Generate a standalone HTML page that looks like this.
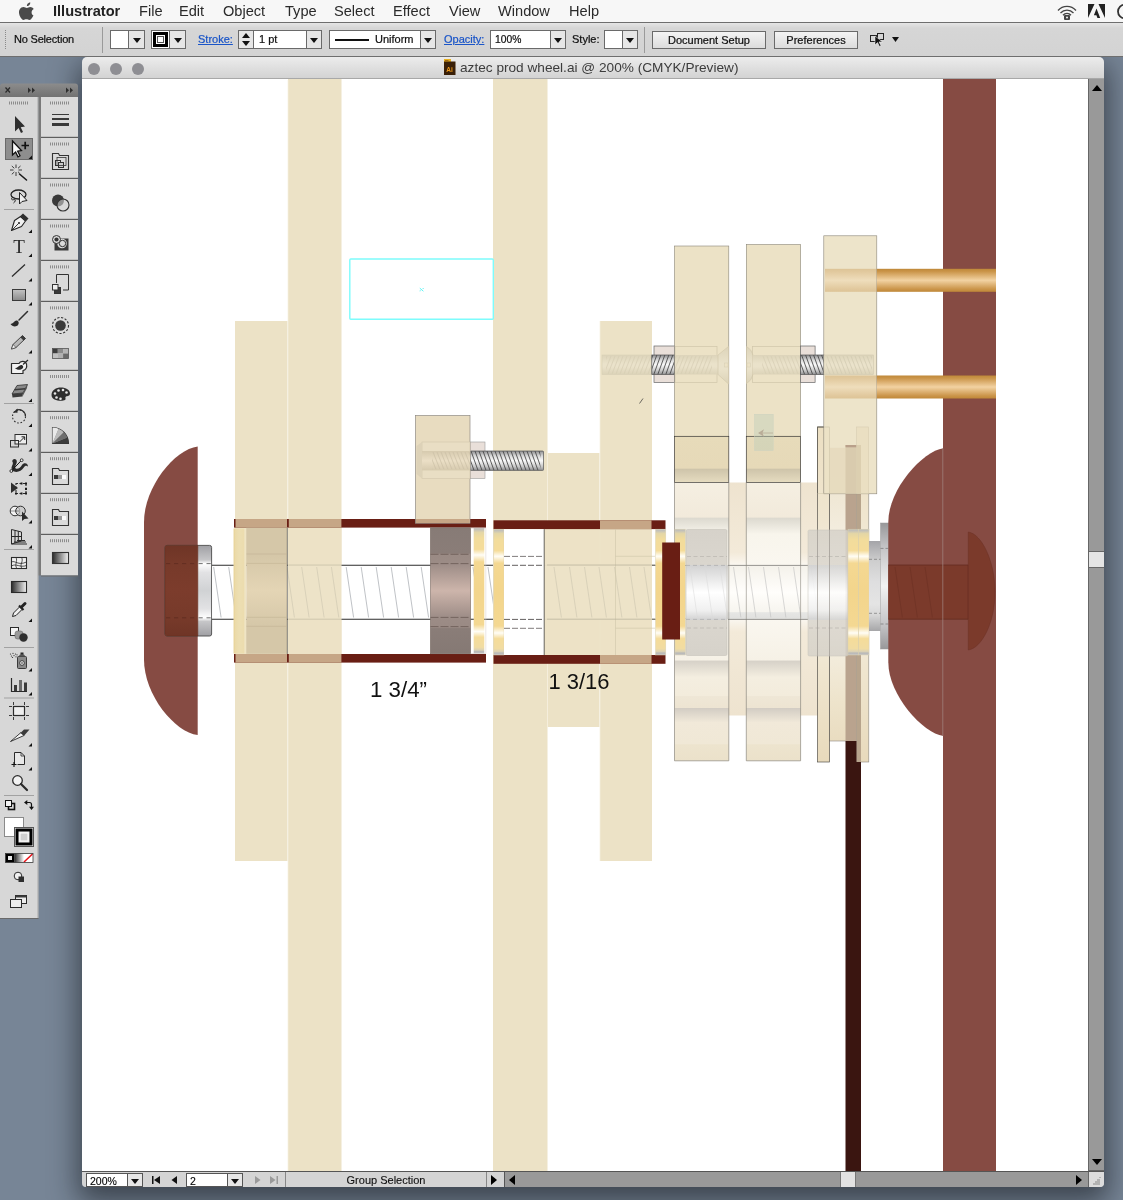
<!DOCTYPE html>
<html>
<head>
<meta charset="utf-8">
<title>aztec prod wheel.ai</title>
<style>
*{box-sizing:border-box;margin:0;padding:0}
html,body{width:1123px;height:1200px;overflow:hidden}
body{position:relative;font-family:"Liberation Sans","DejaVu Sans",sans-serif;background:#778596;}
#winshadow{left:82px;top:57px;width:1022px;height:1130px;border-radius:5px 5px 4px 4px;box-shadow:0 11px 28px 4px rgba(14,18,24,.56)}
.abs{position:absolute}
#menubar,#ctrl,#title,#status,#canvas,#panels,#vscroll{will-change:transform}
/* menu bar */
#menubar{z-index:3;left:0;top:0;width:1123px;height:23px;background:#f7f7f7;border-bottom:1px solid #6e6e6e}
#menubar span{position:absolute;top:2px;font-size:14.6px;color:#2a2a2a;line-height:18px;white-space:nowrap;letter-spacing:0px}
#menubar span.b{font-weight:bold;color:#222}
/* control bar */
#ctrl{z-index:3;left:0;top:23px;width:1123px;height:34px;background:linear-gradient(#e2e2e2 0,#d6d6d6 4px,#d3d3d3 100%);border-bottom:1px solid #6e6e6e;border-top:1px solid #e4e4e4}
#ctrl .t{position:absolute;font-size:11px;color:#111;top:9px;line-height:13px;white-space:nowrap}
#ctrl .t,#ctrl .btn{-webkit-text-stroke:.22px currentColor}
#status span{-webkit-text-stroke:.12px currentColor}
#ctrl .lnk{color:#1a55c8;text-decoration:underline}
#ctrl .box{position:absolute;background:#fff;border:1px solid #6a6a6a}
#ctrl .btn{position:absolute;background:linear-gradient(#f4f4f4,#dcdcdc);border:1px solid #6a6a6a;font-size:11px;text-align:center;color:#111;line-height:16px}
.tri{position:absolute;width:0;height:0;border-left:4px solid transparent;border-right:4px solid transparent;border-top:5px solid #111}
/* document window */
#title{left:82px;top:57px;width:1022px;height:22px;background:linear-gradient(#ececec,#d3d3d3);border-radius:5px 5px 0 0;border-bottom:1px solid #a8a8a8;height:22px}
#title .dot{position:absolute;top:6px;width:12px;height:12px;border-radius:6px;background:#8e8e93}
#title .tt{position:absolute;left:378px;top:2px;font-size:13.65px;color:#3c3c3c;line-height:18px;white-space:nowrap}
#canvas{left:82px;top:79px;width:1006px;height:1092px;background:#fff;overflow:hidden}
#vscroll{left:1088px;top:79px;width:16px;height:1092px;border-bottom:1px solid #666;background:#999;border-left:1px solid #666}
#status{left:82px;top:1171px;width:1022px;height:16px;background:#d4d4d4;border-top:1px solid #555;border-radius:0 0 4px 4px;overflow:hidden}
</style>
</head>
<body>
<!-- MENU BAR -->
<div id="menubar" class="abs">
<svg class="abs" style="left:19px;top:2px" width="16" height="18" viewBox="0 0 16 18"><path d="M11.3 0.4c.1 1-.3 1.9-.9 2.6-.6.7-1.600 1.200-2.500 1.100-.1-1 .4-1.900.9-2.500.7-.7 1.700-1.200 2.500-1.200zM14.400 13.200c-.4 1-.6 1.400-1.100 2.200-.7 1.100-1.700 2.500-3 2.500-1.100 0-1.400-.7-2.900-.7-1.500 0-1.800.7-2.900.7-1.300 0-2.200-1.300-2.900-2.400C-.3 12.600-.5 9 .800 7.200c.9-1.300 2.300-2.100 3.700-2.100 1.400 0 2.300.8 3.400.8 1.100 0 1.800-.8 3.400-.8 1.200 0 2.500.7 3.400 1.800-3 1.600-2.500 5.900-.3 6.300z" fill="#4a4a4a"/></svg>
<span class="b" style="left:53px">Illustrator</span>
<span style="left:139px">File</span>
<span style="left:179px">Edit</span>
<span style="left:223px">Object</span>
<span style="left:285px">Type</span>
<span style="left:334px">Select</span>
<span style="left:393px">Effect</span>
<span style="left:449px">View</span>
<span style="left:498px">Window</span>
<span style="left:569px">Help</span>
<svg class="abs" style="left:1056px;top:2px" width="22" height="19" viewBox="0 0 22 19"><g fill="none" stroke="#444" stroke-width="1.300"><path d="M2 8.500a12 12 0 0 1 18 0"/><path d="M4.500 11a9 9 0 0 1 13 0"/><path d="M7 13.200a5.500 5.500 0 0 1 8 0"/></g><rect x="8" y="13" width="6" height="5" rx="1" fill="#444"/><circle cx="11" cy="15.500" r="1" fill="#f1f1f1"/></svg>
<svg class="abs" style="left:1088px;top:3px" width="17" height="16" viewBox="0 0 17 16"><path d="M0 1h6.500L0 15zM17 1h-6.500L17 15zM8.500 5.500l3.700 9.500h-2.800l-1-2.800h-2.500z" fill="#222"/></svg>
<svg class="abs" style="left:1116px;top:3px" width="8" height="17" viewBox="0 0 8 17"><circle cx="9" cy="8.500" r="7" fill="none" stroke="#333" stroke-width="1.800"/></svg>
</div>
<!-- CONTROL BAR -->
<div id="ctrl" class="abs">
<svg class="abs" style="left:4px;top:6px" width="3" height="20"><g fill="#8a8a8a"><rect x="1" y="0" width="1" height="1"/><rect x="1" y="2" width="1" height="1"/><rect x="1" y="4" width="1" height="1"/><rect x="1" y="6" width="1" height="1"/><rect x="1" y="8" width="1" height="1"/><rect x="1" y="10" width="1" height="1"/><rect x="1" y="12" width="1" height="1"/><rect x="1" y="14" width="1" height="1"/><rect x="1" y="16" width="1" height="1"/><rect x="1" y="18" width="1" height="1"/></g></svg>
<span class="t" style="left:14px;letter-spacing:-.2px">No Selection</span>
<div class="abs" style="left:102px;top:3px;width:1px;height:26px;background:#9a9a9a"></div>
<!-- fill -->
<div class="box" style="left:110px;top:6px;width:35px;height:19px;background:#e6e6e6"><div class="abs" style="left:0;top:0;width:18px;height:17px;background:#fff;border-right:1px solid #6a6a6a"></div><div class="tri" style="left:22px;top:7px"></div></div>
<!-- stroke -->
<div class="box" style="left:151px;top:6px;width:35px;height:19px;background:#e6e6e6"><div class="abs" style="left:0;top:0;width:18px;height:17px;background:#fff;border-right:1px solid #6a6a6a"></div><div class="abs" style="left:1px;top:1px;width:15px;height:15px;border:3px solid #000;background:#fff"><div class="abs" style="left:1px;top:1px;width:7px;height:7px;border:1px solid #555"></div></div><div class="tri" style="left:22px;top:7px"></div></div>
<span class="t lnk" style="left:198px">Stroke:</span>
<!-- stepper + input -->
<div class="box" style="left:238px;top:6px;width:84px;height:19px;background:#fff"><div class="abs" style="left:0;top:0;width:15px;height:17px;background:#e6e6e6;border-right:1px solid #6a6a6a"></div><div class="tri" style="left:3px;top:2px;border-top:0;border-bottom:5px solid #111"></div><div class="tri" style="left:3px;top:10px"></div><div class="abs" style="left:67px;top:0;width:15px;height:17px;background:#e6e6e6;border-left:1px solid #6a6a6a"></div><div class="tri" style="left:71px;top:7px"></div><span class="t" style="left:20px;top:2px">1 pt</span></div>
<!-- profile -->
<div class="box" style="left:329px;top:6px;width:107px;height:19px;background:#fff"><div class="abs" style="left:5px;top:8px;width:34px;height:2px;background:#111"></div><span class="t" style="left:45px;top:2px">Uniform</span><div class="abs" style="left:90px;top:0;width:15px;height:17px;background:#e6e6e6;border-left:1px solid #6a6a6a"></div><div class="tri" style="left:94px;top:7px"></div></div>
<span class="t lnk" style="left:444px">Opacity:</span>
<div class="box" style="left:490px;top:6px;width:76px;height:19px;background:#fff"><span class="t" style="left:4px;top:2px;font-size:10.300px">100%</span><div class="abs" style="left:59px;top:0;width:15px;height:17px;background:#e6e6e6;border-left:1px solid #6a6a6a"></div><div class="tri" style="left:63px;top:7px"></div></div>
<span class="t" style="left:572px">Style:</span>
<div class="box" style="left:604px;top:6px;width:34px;height:19px;background:#e6e6e6"><div class="abs" style="left:0;top:0;width:18px;height:17px;background:#fff;border-right:1px solid #6a6a6a"></div><div class="tri" style="left:21px;top:7px"></div></div>
<div class="abs" style="left:644px;top:3px;width:1px;height:26px;background:#9a9a9a"></div>
<div class="btn" style="left:652px;top:7px;width:114px;height:18px">Document Setup</div>
<div class="btn" style="left:774px;top:7px;width:84px;height:18px">Preferences</div>
<svg class="abs" style="left:868px;top:7px" width="34" height="18" viewBox="0 0 34 18"><rect x="2.500" y="4.500" width="6" height="6" fill="none" stroke="#222"/><rect x="9.500" y="2.500" width="6" height="6" fill="none" stroke="#222"/><path d="M7 5l0 9 2.500-2.500 2 4 1.500-.8-2-3.800 3.500 0z" fill="#111" stroke="#fff" stroke-width=".5"/><path d="M24 6h7l-3.500 5z" fill="#111"/></svg>
</div>
<!-- DOCUMENT WINDOW -->
<div id="winshadow" class="abs"></div>
<div id="title" class="abs">
<div class="dot" style="left:6px"></div><div class="dot" style="left:28px"></div><div class="dot" style="left:50px"></div>
<svg class="abs" style="left:361px;top:2px" width="13" height="17" viewBox="0 0 13 17"><rect x="1" y="0" width="7" height="5" fill="#e8b020"/><rect x="1" y="2.500" width="11.500" height="13.500" fill="#3a2008"/><rect x="2" y="1" width="3.500" height="1.200" fill="#a06a10"/><text x="3.200" y="13" font-family="Liberation Sans, sans-serif" font-size="6.500" font-weight="bold" fill="#f09a1a">Ai</text></svg>
<span class="tt">aztec prod wheel.ai @ 200% (CMYK/Preview)</span>
</div>
<div id="canvas" class="abs">
<svg id="art" class="abs" style="left:-82px;top:-79px" width="1123" height="1200" viewBox="0 0 1123 1200">
<defs>
<linearGradient id="gWash" x1="0" y1="0" x2="0" y2="1"><stop offset="0" stop-color="#b6b6b4"/><stop offset="0.012" stop-color="#c4c2ba"/><stop offset="0.035" stop-color="#e4d6a6"/><stop offset="0.08" stop-color="#f2dc9c"/><stop offset="0.17" stop-color="#f5dc9a"/><stop offset="0.215" stop-color="#fffdf6"/><stop offset="0.27" stop-color="#f4d892"/><stop offset="0.5" stop-color="#f3d58c"/><stop offset="0.77" stop-color="#f4d892"/><stop offset="0.825" stop-color="#fffdf6"/><stop offset="0.87" stop-color="#f5dc9a"/><stop offset="0.95" stop-color="#f1dca2"/><stop offset="0.972" stop-color="#dcd2b4"/><stop offset="0.985" stop-color="#b8b8b8"/><stop offset="1" stop-color="#c4c4c4"/></linearGradient>
<linearGradient id="gW0" x1="0" y1="0" x2="1" y2="0"><stop offset="0" stop-color="#e6cf8e"/><stop offset="0.12" stop-color="#ebdaa8"/><stop offset="0.5" stop-color="#ecdeb2"/><stop offset="1" stop-color="#ecdcae"/></linearGradient>
<linearGradient id="gDowel" x1="0" y1="0" x2="0" y2="1"><stop offset="0" stop-color="#bf8838"/><stop offset="0.12" stop-color="#cb954a"/><stop offset="0.5" stop-color="#f2d2a2"/><stop offset="0.88" stop-color="#cb954a"/><stop offset="1" stop-color="#bf8838"/></linearGradient>
<linearGradient id="gSilver" x1="0" y1="0" x2="0" y2="1"><stop offset="0" stop-color="#98989a"/><stop offset="0.18" stop-color="#c2c2c4"/><stop offset="0.5" stop-color="#f2f2f2"/><stop offset="0.82" stop-color="#c2c2c4"/><stop offset="1" stop-color="#98989a"/></linearGradient>
<linearGradient id="gNut" x1="0" y1="0" x2="0" y2="1"><stop offset="0" stop-color="#a4a4a8"/><stop offset="0.22" stop-color="#cecece"/><stop offset="0.45" stop-color="#dededf"/><stop offset="0.7" stop-color="#e4e4e4"/><stop offset="0.82" stop-color="#d8d8d8"/><stop offset="1" stop-color="#a6a6a8"/></linearGradient>
<linearGradient id="gPlate2" gradientUnits="userSpaceOnUse" x1="0" y1="448" x2="0" y2="741"><stop offset="0" stop-color="#ece2cc"/><stop offset="0.18" stop-color="#f0e8d6"/><stop offset="0.31" stop-color="#f4eee0"/><stop offset="0.49" stop-color="#f8f4ea"/><stop offset="0.67" stop-color="#f4eee0"/><stop offset="0.86" stop-color="#eee4cc"/><stop offset="1" stop-color="#e9dcc0"/></linearGradient>
<linearGradient id="gShaft" x1="0" y1="0" x2="0" y2="1"><stop offset="0" stop-color="#d6caae"/><stop offset="0.5" stop-color="#ebdfc6"/><stop offset="1" stop-color="#d6caae"/></linearGradient>
<linearGradient id="gNutL" x1="0" y1="0" x2="0" y2="1"><stop offset="0" stop-color="#a0a0a4"/><stop offset="0.16" stop-color="#c6c6c8"/><stop offset="0.2" stop-color="#ffffff"/><stop offset="0.3" stop-color="#e2e2e4"/><stop offset="0.5" stop-color="#d0d2d4"/><stop offset="0.7" stop-color="#e2e2e4"/><stop offset="0.8" stop-color="#ffffff"/><stop offset="0.84" stop-color="#c6c6c8"/><stop offset="1" stop-color="#a0a0a4"/></linearGradient>
<linearGradient id="gNutB" x1="0" y1="0" x2="0" y2="1"><stop offset="0" stop-color="#6f3526"/><stop offset="0.2" stop-color="#773a2a"/><stop offset="0.5" stop-color="#7c3c2c"/><stop offset="0.8" stop-color="#773a2a"/><stop offset="1" stop-color="#6f3526"/></linearGradient>
<linearGradient id="gFade" x1="0" y1="0" x2="0" y2="1"><stop offset="0" stop-color="#ddd4ba"/><stop offset="0.45" stop-color="#eae2ca"/><stop offset="0.6" stop-color="#eae2ca"/><stop offset="1" stop-color="#dcd3b8"/></linearGradient>
<linearGradient id="gBolt" x1="0" y1="0" x2="0" y2="1"><stop offset="0" stop-color="#8e8e90"/><stop offset="0.25" stop-color="#d8d8d8"/><stop offset="0.5" stop-color="#fafafa"/><stop offset="0.8" stop-color="#c8c8c8"/><stop offset="1" stop-color="#8e8e90"/></linearGradient>
<linearGradient id="gGreyBlk" x1="0" y1="0" x2="0" y2="1"><stop offset="0" stop-color="#877b76"/><stop offset="0.2" stop-color="#8a7d78"/><stop offset="0.21" stop-color="#9a8a84"/><stop offset="0.285" stop-color="#9c8c86"/><stop offset="0.5" stop-color="#cdb5ab"/><stop offset="0.715" stop-color="#9c8c86"/><stop offset="0.79" stop-color="#9a8a84"/><stop offset="0.8" stop-color="#8a7d78"/><stop offset="1" stop-color="#857974"/></linearGradient>
<linearGradient id="gBlkD" x1="0" y1="0" x2="0" y2="1"><stop offset="0" stop-color="#d5c7a8"/><stop offset="0.22" stop-color="#d5c7a8"/><stop offset="0.5" stop-color="#e4d5b5"/><stop offset="0.78" stop-color="#d5c7a8"/><stop offset="1" stop-color="#d5c7a8"/></linearGradient>
<linearGradient id="gRod" x1="0" y1="0" x2="0" y2="1"><stop offset="0" stop-color="#d6d6d6"/><stop offset="0.12" stop-color="#e6e6e6"/><stop offset="0.5" stop-color="#ffffff"/><stop offset="0.82" stop-color="#f0f0f0"/><stop offset="0.9" stop-color="#dcdcdc"/><stop offset="1" stop-color="#d2d2d2"/></linearGradient>
<linearGradient id="gRodL" x1="0" y1="0" x2="0" y2="1"><stop offset="0" stop-color="#f4f1ea"/><stop offset="0.5" stop-color="#fffefb"/><stop offset="0.86" stop-color="#f7f5ef"/><stop offset="0.88" stop-color="#e6e6e4"/><stop offset="1" stop-color="#e0e0de"/></linearGradient>
<linearGradient id="gPlate" gradientUnits="userSpaceOnUse" x1="0" y1="427" x2="0" y2="762"><stop offset="0" stop-color="#ecdfc2"/><stop offset="0.28" stop-color="#f0e6d0"/><stop offset="0.49" stop-color="#f8f4ea"/><stop offset="0.71" stop-color="#f0e6d0"/><stop offset="1" stop-color="#e8dabc"/></linearGradient>
<linearGradient id="gGearU" gradientUnits="userSpaceOnUse" x1="0" y1="436" x2="0" y2="565"><stop offset="0" stop-color="#e7dbba"/><stop offset="0.25" stop-color="#e6d9b8"/><stop offset="0.256" stop-color="#cec4aa"/><stop offset="0.36" stop-color="#e6dcc0"/><stop offset="0.3601" stop-color="#f5efe2"/><stop offset="0.63" stop-color="#f2eadb"/><stop offset="0.635" stop-color="#dcd9cf"/><stop offset="0.76" stop-color="#f8f5ec"/><stop offset="1" stop-color="#faf7f0"/></linearGradient>
<linearGradient id="gGearL" gradientUnits="userSpaceOnUse" x1="0" y1="619" x2="0" y2="761"><stop offset="0" stop-color="#faf7f0"/><stop offset="0.29" stop-color="#f6f1e6"/><stop offset="0.295" stop-color="#d6d1c8"/><stop offset="0.41" stop-color="#f4eee0"/><stop offset="0.54" stop-color="#f3ecdc"/><stop offset="0.545" stop-color="#efe7d6"/><stop offset="0.625" stop-color="#ede4d2"/><stop offset="0.63" stop-color="#d3cdc4"/><stop offset="0.73" stop-color="#f1e9d9"/><stop offset="0.88" stop-color="#f0e8d6"/><stop offset="0.885" stop-color="#ede4ce"/><stop offset="1" stop-color="#ebe1ca"/></linearGradient>
<linearGradient id="gBear" gradientUnits="userSpaceOnUse" x1="0" y1="529" x2="0" y2="656"><stop offset="0" stop-color="#d6d2ca"/><stop offset="0.28" stop-color="#dad6ce"/><stop offset="0.285" stop-color="#d2d2d2"/><stop offset="0.5" stop-color="#ffffff"/><stop offset="0.64" stop-color="#f0f0f0"/><stop offset="0.715" stop-color="#d2d2d2"/><stop offset="0.72" stop-color="#dad6ce"/><stop offset="1" stop-color="#d6d2ca"/></linearGradient>
<linearGradient id="gHub" gradientUnits="userSpaceOnUse" x1="0" y1="482" x2="0" y2="716"><stop offset="0" stop-color="#eee3cf"/><stop offset="0.3" stop-color="#f3ead9"/><stop offset="0.36" stop-color="#fbf8f2"/><stop offset="0.58" stop-color="#fbf8f2"/><stop offset="0.64" stop-color="#f3ead9"/><stop offset="1" stop-color="#eee3cf"/></linearGradient>
</defs>
<rect x="288" y="78" width="53.500" height="1094" fill="#ece2c6"/>
<rect x="493" y="78" width="54.500" height="1094" fill="#ece2c6"/>
<rect x="943" y="78" width="53" height="1094" fill="#864b43"/>
<rect x="235" y="321" width="52.500" height="540" fill="#ece2c6"/>
<rect x="600" y="321" width="52" height="540" fill="#ece2c6"/>
<rect x="547.500" y="453" width="52" height="274" fill="#ece2c6"/>
<path d="M288 80V1171M547.500 453V727M600 321V861" stroke="#f6f0e0" stroke-width=".7"/>
<path d="M197.700 446.500C175 449 144 487 144 522L144 659.500C144 695 175 732.500 197.700 735Z" fill="#864b43"/>
<rect x="165" y="545.400" width="46.600" height="90.600" rx="2" fill="url(#gNutL)" stroke="#4a4a4a" stroke-width=".9"/>
<path d="M167 545.400H197.800V636H167Q165 636 165 634V547.400Q165 545.400 167 545.400Z" fill="url(#gNutB)" stroke="#6a3020" stroke-width=".6"/>
<path d="M166 563.600H197.800M166 617.800H197.800" stroke="#5a2a1e" stroke-width=".7" stroke-dasharray="4.200 3.800" fill="none"/>
<path d="M198.500 563.600H211M198.500 617.800H211" stroke="#4a4a4a" stroke-width=".8" stroke-dasharray="4.200 3.800" fill="none"/>
<rect x="212.200" y="565" width="676" height="54" fill="#fff"/>
<path d="M212 565.200H686M212 619.300H686" stroke="#2e2e2e" stroke-width="1.100" fill="none"/>
<path d="M213.7 567L221.1 617.5M228.7 567L236.1 617.5M346.2 567L353.6 617.5M361.2 567L368.6 617.5M376.2 567L383.6 617.5M391.2 567L398.6 617.5M406.2 567L413.6 617.5M421.2 567L428.6 617.5M473.0 567L480.4 617.5M488.0 567L495.4 617.5" stroke="#a4a8ae" stroke-width="0.7" fill="none" opacity="1"/>
<rect x="288" y="528" width="53.500" height="126" fill="#ece2c6" opacity=".965"/>
<rect x="493" y="529" width="11" height="126" fill="#ece2c6"/>
<rect x="544" y="529" width="108" height="126" fill="#ece2c6" opacity=".965"/>
<path d="M287.0 567L294.4 617.5M301.7 567L309.1 617.5M316.7 567L324.1 617.5M331.4 567L338.8 617.5" stroke="#cbc4ae" stroke-width="0.6" fill="none" opacity="1"/>
<path d="M554.0 567L561.4 617.5M569.5 567L576.9 617.5M584.5 567L591.9 617.5M599.0 567L606.4 617.5M614.5 567L621.9 617.5M629.5 567L636.9 617.5M644.0 567L651.4 617.5" stroke="#cbc4ae" stroke-width="0.6" fill="none" opacity="1"/>
<rect x="234" y="519" width="252" height="8.600" fill="#691e14"/><rect x="234" y="654" width="252" height="8.600" fill="#691e14"/>
<rect x="235.500" y="519" width="51.500" height="8.600" fill="#c6a686"/><rect x="288.800" y="519" width="52.600" height="8.600" fill="#c6a686"/>
<rect x="235.500" y="654" width="51.500" height="8.600" fill="#c6a686"/><rect x="288.800" y="654" width="52.600" height="8.600" fill="#c6a686"/>
<rect x="493.500" y="520.3" width="172" height="8.800" fill="#691e14"/><rect x="600" y="520.3" width="51.500" height="8.800" fill="#c6a686"/>
<rect x="493.500" y="655" width="172" height="8.800" fill="#691e14"/><rect x="600" y="655" width="51.500" height="8.800" fill="#c6a686"/>
<rect x="233.700" y="528.500" width="12.600" height="125" fill="#efe4c4"/><rect x="233.700" y="528.500" width="10.600" height="125" fill="url(#gW0)"/>
<rect x="246.300" y="527.800" width="41" height="126" fill="url(#gBlkD)"/>
<path d="M287.300 527.800V654" stroke="#555" stroke-width=".7"/>
<path d="M246.500 554H287M246.500 563.400H287M246.500 617.300H287M246.500 626.300H287" stroke="#c2b494" stroke-width=".6" fill="none"/>
<rect x="430.300" y="527.800" width="40.400" height="126" fill="url(#gGreyBlk)" stroke="#74665f" stroke-width=".5"/>
<path d="M430.500 554.300H470.500M430.500 563.600H470.500M430.500 617.400H470.500M430.500 626.600H470.500" stroke="#54443e" stroke-width=".55" stroke-dasharray="8 2" fill="none"/>
<rect x="473.700" y="528" width="10.600" height="125.500" fill="url(#gWash)"/><path d="M470.700 528.300H485.800V653.500H470.700" fill="none" stroke="#d9cfc8" stroke-width=".5"/>
<rect x="493.800" y="529.200" width="10.200" height="125.800" fill="url(#gWash)" stroke="#dcd3b2" stroke-width=".5"/>
<rect x="504" y="529.200" width="40" height="125.800" fill="#fff"/>
<path d="M504 565.300H544M504 619.400H544" stroke="#2e2a2a" stroke-width=".75" stroke-dasharray="6 2"/>
<path d="M504 556.400H544M504 628.300H544" stroke="#4a4444" stroke-width=".7" stroke-dasharray="6 2"/>
<path d="M544.200 529.200V655" stroke="#444" stroke-width=".8"/>
<path d="M615.500 529.200V655M615.500 556.300H655M615.500 628.200H655" stroke="#cfc6aa" stroke-width=".6" fill="none"/>
<path d="M547 565H655M547 619.200H655" stroke="#b4ac98" stroke-width=".6" fill="none"/>
<path d="M288.500 565H341M288.500 619.200H341" stroke="#c4bca4" stroke-width=".6" fill="none"/>
<rect x="655.500" y="529.200" width="10.300" height="125.800" fill="url(#gWash)" stroke="#dcd3b2" stroke-width=".5"/>
<rect x="728" y="482.500" width="90" height="233" fill="url(#gHub)"/>
<rect x="674.500" y="246" width="54.300" height="190.500" fill="#ece2c6" stroke="#8a8578" stroke-width=".6"/>
<rect x="746.300" y="244.500" width="54.300" height="192" fill="#ece2c6" stroke="#8a8578" stroke-width=".6"/>
<rect x="674.5" y="436.300" width="54.300" height="128.700" fill="url(#gGearU)"/><rect x="674.5" y="619" width="54.300" height="141.800" fill="url(#gGearL)"/>
<rect x="674.5" y="436.300" width="54.300" height="46.300" fill="none" stroke="#3c3a36" stroke-width=".7"/>
<path d="M674.5 482.500V760.800H728.8V482.500" stroke="#8c8880" stroke-width=".7" fill="none"/>
<rect x="746.3" y="436.300" width="54.300" height="128.700" fill="url(#gGearU)"/><rect x="746.3" y="619" width="54.300" height="141.800" fill="url(#gGearL)"/>
<rect x="746.3" y="436.300" width="54.300" height="46.300" fill="none" stroke="#3c3a36" stroke-width=".7"/>
<path d="M746.3 482.500V760.800H800.5999999999999V482.500" stroke="#8c8880" stroke-width=".7" fill="none"/>
<rect x="686" y="565" width="42" height="54.200" fill="url(#gRod)"/>
<rect x="728" y="565" width="80" height="54.200" fill="url(#gRodL)"/>
<rect x="808" y="565" width="40" height="54.200" fill="url(#gRod)" opacity=".8"/>
<path d="M690.0 567L697.4 617.5M705.0 567L712.4 617.5M720.0 567L727.4 617.5" stroke="#d0d0d0" stroke-width="0.5" fill="none" opacity="1"/>
<path d="M733.5 567L740.9 617.5M748.5 567L755.9 617.5M763.5 567L770.9 617.5M778.5 567L785.9 617.5M793.5 567L800.9 617.5" stroke="#c0c0c0" stroke-width="0.6" fill="none" opacity="1"/>
<path d="M811.0 567L818.4 617.5M826.0 567L833.4 617.5" stroke="#d4d4d4" stroke-width="0.5" fill="none" opacity="1"/>
<path d="M728 565.400H808M728 619.400H808" stroke="#6e6c68" stroke-width=".7" fill="none"/>
<path d="M728.800 565V619M746.300 565V619M800.600 565V619" stroke="#8c8880" stroke-width=".6"/>
<rect x="675" y="529.200" width="10.300" height="125.800" fill="url(#gWash)" stroke="#dcd3b2" stroke-width=".5"/>
<rect x="662.200" y="542.500" width="17.800" height="97" fill="#691e14"/>
<rect x="686" y="529.500" width="41" height="126" rx="1.500" fill="url(#gBear)" stroke="#c6c2ba" stroke-width=".6"/>
<path d="M687 556.500H727M687 628H727" stroke="#b4b0aa" stroke-width=".6" stroke-dasharray="4 2.500"/>
<path d="M686 565.400H728M686 619.400H728" stroke="#a4a4a4" stroke-width=".6" stroke-dasharray="4 3"/>
<path d="M690.0 567L697.4 617.5M705.0 567L712.4 617.5M720.0 567L727.4 617.5" stroke="#d8d8d8" stroke-width="0.5" fill="none" opacity="1"/>
<rect x="829.500" y="448" width="27" height="293" fill="url(#gPlate2)" stroke="#8c8880" stroke-width=".6"/>
<rect x="845.500" y="445" width="11" height="296" fill="#b9a38e"/>
<rect x="817.500" y="427" width="12" height="335" fill="url(#gPlate)" stroke="#55524c" stroke-width=".7"/>
<rect x="856.500" y="427" width="12.300" height="335" fill="url(#gPlate)" stroke="#8c8880" stroke-width=".6"/>
<rect x="856.500" y="445" width="4.500" height="317" fill="#b7a48c"/>
<path d="M845.500 741H856.500V762H861V1171H845.500Z" fill="#3a1510"/>
<rect x="808" y="530" width="40" height="126" rx="1.500" fill="url(#gBear)" stroke="#c6c2ba" stroke-width=".6" opacity=".85"/>
<path d="M809 556.500H847M809 628H847" stroke="#b4b0aa" stroke-width=".6" stroke-dasharray="4 2.500"/>
<path d="M817.500 530V656M829.500 530V656" stroke="#9a968e" stroke-width=".6"/>
<rect x="848" y="529.200" width="10.600" height="125.800" fill="url(#gWash)" stroke="#dcd3b2" stroke-width=".5"/>
<rect x="858.600" y="529.200" width="10.400" height="125.800" fill="url(#gWash)" stroke="#dcd3b2" stroke-width=".5"/>
<rect x="869" y="541" width="11.500" height="90" fill="url(#gNut)"/>
<rect x="880.500" y="523" width="8.300" height="126" fill="url(#gSilver)" stroke="#9a9a9a" stroke-width=".5"/>
<path d="M869 559.300H880.500M869 613.300H880.500M880.500 548.400H888.300M880.500 624H888.300" stroke="#666" stroke-width=".6" stroke-dasharray="3 2"/>
<path d="M943.300 448.300C923 451 888.300 489 888.300 522L888.300 662.300C888.300 695 923 733.500 943.300 736Z" fill="#864b43"/>
<rect x="888.300" y="565" width="80" height="54.200" fill="#7b3a2b"/>
<path d="M888.300 565H968.300M888.300 619.200H968.300M968.300 565V619.200" stroke="#5e2a1e" stroke-width=".7" fill="none"/>
<path d="M895.0 567L902.4 617.5M910.0 567L917.4 617.5M925.0 567L932.4 617.5" stroke="#6b3024" stroke-width="0.6" fill="none" opacity="1"/>
<path d="M968.300 532C982 534 995 562 995 592C995 622 982 648 968.300 650Z" fill="#7b3a2b" stroke="#6a3024" stroke-width=".5"/>
<path d="M942.800 448.500V736" stroke="#a58a84" stroke-width=".7"/>
<rect x="823.800" y="235.800" width="53" height="258" fill="#ece2c6" fill-opacity=".93" stroke="#8a8578" stroke-width=".6"/>
<rect x="877" y="268.8" width="119" height="23" fill="url(#gDowel)"/><rect x="825" y="268.8" width="52" height="23" fill="url(#gDowel)" opacity=".35"/>
<rect x="877" y="375.5" width="119" height="23" fill="url(#gDowel)"/><rect x="825" y="375.5" width="52" height="23" fill="url(#gDowel)" opacity=".35"/>
<rect x="470" y="442" width="15" height="36.500" fill="#e9dfd9" stroke="#9a9a9a" stroke-width=".6"/>
<rect x="470" y="451" width="73.500" height="19.400" fill="url(#gBolt)"/>
<clipPath id="c1"><rect x="470" y="451" width="70.5" height="19.399999999999977"/></clipPath><path clip-path="url(#c1)" d="M459.0 451L466.0 470.4M463.0 451L470.0 470.4M467.0 451L474.0 470.4M471.0 451L478.0 470.4M475.0 451L482.0 470.4M479.0 451L486.0 470.4M483.0 451L490.0 470.4M487.0 451L494.0 470.4M491.0 451L498.0 470.4M495.0 451L502.0 470.4M499.0 451L506.0 470.4M503.0 451L510.0 470.4M507.0 451L514.0 470.4M511.0 451L518.0 470.4M515.0 451L522.0 470.4M519.0 451L526.0 470.4M523.0 451L530.0 470.4M527.0 451L534.0 470.4M531.0 451L538.0 470.4M535.0 451L542.0 470.4M539.0 451L546.0 470.4M543.0 451L550.0 470.4M547.0 451L554.0 470.4M551.0 451L558.0 470.4" stroke="#454545" stroke-width="0.85" fill="none" />
<rect x="470" y="451" width="73.500" height="19.400" rx="1" fill="none" stroke="#555" stroke-width=".7"/>
<rect x="415.500" y="415.500" width="54.500" height="107.700" fill="#e8dcc0" stroke="#8f8b84" stroke-width=".7"/>
<rect x="416" y="519" width="53.700" height="4" fill="#c6a686"/>
<rect x="422" y="442" width="48" height="36.500" fill="#e9dec4" stroke="#d2c7ac" stroke-width=".6"/>
<path d="M416.500 446L422 442V478.500L416.500 474Z" fill="#ddd2b8"/>
<rect x="422" y="451" width="48" height="19.400" fill="url(#gShaft)"/>
<clipPath id="c2"><rect x="432" y="452" width="38" height="17.5"/></clipPath><path clip-path="url(#c2)" d="M421.0 452L428.0 469.5M425.0 452L432.0 469.5M429.0 452L436.0 469.5M433.0 452L440.0 469.5M437.0 452L444.0 469.5M441.0 452L448.0 469.5M445.0 452L452.0 469.5M449.0 452L456.0 469.5M453.0 452L460.0 469.5M457.0 452L464.0 469.5M461.0 452L468.0 469.5M465.0 452L472.0 469.5M469.0 452L476.0 469.5M473.0 452L480.0 469.5M477.0 452L484.0 469.5" stroke="#cabfa6" stroke-width="0.7" fill="none" />
<rect x="602" y="355" width="50" height="19.500" fill="url(#gFade)" stroke="#d8cfb6" stroke-width=".6"/>
<clipPath id="c3"><rect x="606" y="356" width="46" height="18"/></clipPath><path clip-path="url(#c3)" d="M595.0 356L588.0 374M599.0 356L592.0 374M603.0 356L596.0 374M607.0 356L600.0 374M611.0 356L604.0 374M615.0 356L608.0 374M619.0 356L612.0 374M623.0 356L616.0 374M627.0 356L620.0 374M631.0 356L624.0 374M635.0 356L628.0 374M639.0 356L632.0 374M643.0 356L636.0 374M647.0 356L640.0 374M651.0 356L644.0 374M655.0 356L648.0 374M659.0 356L652.0 374" stroke="#d6cdb3" stroke-width="0.7" fill="none" />
<rect x="654" y="346" width="20.500" height="36.400" fill="#e9dfd9" stroke="#666" stroke-width=".7"/>
<rect x="651.800" y="355" width="22.700" height="19.500" fill="url(#gBolt)"/>
<clipPath id="c4"><rect x="651.8" y="355" width="22.700000000000045" height="19.5"/></clipPath><path clip-path="url(#c4)" d="M640.8 355L633.8 374.5M644.8 355L637.8 374.5M648.8 355L641.8 374.5M652.8 355L645.8 374.5M656.8 355L649.8 374.5M660.8 355L653.8 374.5M664.8 355L657.8 374.5M668.8 355L661.8 374.5M672.8 355L665.8 374.5M676.8 355L669.8 374.5M680.8 355L673.8 374.5M684.8 355L677.8 374.5" stroke="#454545" stroke-width="0.85" fill="none" />
<rect x="651.800" y="355" width="22.700" height="19.500" fill="none" stroke="#555" stroke-width=".7"/>
<rect x="675" y="346.500" width="42" height="36" fill="none" stroke="#d0c6aa" stroke-width=".7"/>
<rect x="675" y="355" width="43.500" height="19.500" fill="url(#gFade)"/>
<clipPath id="c5"><rect x="675" y="356" width="37" height="18"/></clipPath><path clip-path="url(#c5)" d="M664.0 356L657.0 374M668.0 356L661.0 374M672.0 356L665.0 374M676.0 356L669.0 374M680.0 356L673.0 374M684.0 356L677.0 374M688.0 356L681.0 374M692.0 356L685.0 374M696.0 356L689.0 374M700.0 356L693.0 374M704.0 356L697.0 374M708.0 356L701.0 374M712.0 356L705.0 374M716.0 356L709.0 374M720.0 356L713.0 374" stroke="#d6cdb3" stroke-width="0.7" fill="none" />
<path d="M718 355L728.600 346.400V384L718 374.500Z" fill="url(#gFade)" stroke="#d0c6aa" stroke-width=".6"/>
<rect x="724.500" y="363" width="3.500" height="4" fill="#ece2c6" stroke="#d6cdb3" stroke-width=".5"/>
<path d="M746.500 346.500Q751.500 349 753 355V374.500Q751.500 381 746.500 383.500Z" fill="url(#gFade)" stroke="#d0c6aa" stroke-width=".6"/>
<rect x="747" y="363" width="3.500" height="4" fill="#ece2c6" stroke="#d6cdb3" stroke-width=".5"/>
<rect x="752.500" y="346.500" width="48" height="36" fill="none" stroke="#d0c6aa" stroke-width=".7"/>
<rect x="752.500" y="355" width="48" height="19.500" fill="url(#gFade)"/>
<clipPath id="c6"><rect x="762" y="356" width="38" height="18"/></clipPath><path clip-path="url(#c6)" d="M751.0 356L758.0 374M755.0 356L762.0 374M759.0 356L766.0 374M763.0 356L770.0 374M767.0 356L774.0 374M771.0 356L778.0 374M775.0 356L782.0 374M779.0 356L786.0 374M783.0 356L790.0 374M787.0 356L794.0 374M791.0 356L798.0 374M795.0 356L802.0 374M799.0 356L806.0 374M803.0 356L810.0 374M807.0 356L814.0 374" stroke="#d6cdb3" stroke-width="0.7" fill="none" />
<rect x="800.600" y="346" width="14.500" height="36.400" fill="#e9dfd9" stroke="#666" stroke-width=".7"/>
<rect x="800.600" y="355" width="23.200" height="19.500" fill="url(#gBolt)"/>
<clipPath id="c7"><rect x="800.6" y="355" width="23.199999999999932" height="19.5"/></clipPath><path clip-path="url(#c7)" d="M789.6 355L796.6 374.5M793.6 355L800.6 374.5M797.6 355L804.6 374.5M801.6 355L808.6 374.5M805.6 355L812.6 374.5M809.6 355L816.6 374.5M813.6 355L820.6 374.5M817.6 355L824.6 374.5M821.6 355L828.6 374.5M825.6 355L832.6 374.5M829.6 355L836.6 374.5M833.6 355L840.6 374.5" stroke="#454545" stroke-width="0.85" fill="none" />
<rect x="800.600" y="355" width="23.200" height="19.500" fill="none" stroke="#555" stroke-width=".7"/>
<rect x="824" y="355" width="49.300" height="19.500" fill="url(#gFade)" stroke="#d0c8b0" stroke-width=".6"/>
<clipPath id="c8"><rect x="826" y="356" width="46" height="18"/></clipPath><path clip-path="url(#c8)" d="M815.0 356L822.0 374M819.0 356L826.0 374M823.0 356L830.0 374M827.0 356L834.0 374M831.0 356L838.0 374M835.0 356L842.0 374M839.0 356L846.0 374M843.0 356L850.0 374M847.0 356L854.0 374M851.0 356L858.0 374M855.0 356L862.0 374M859.0 356L866.0 374M863.0 356L870.0 374M867.0 356L874.0 374M871.0 356L878.0 374M875.0 356L882.0 374M879.0 356L886.0 374" stroke="#d0c8b0" stroke-width="0.7" fill="none" />
<rect x="754.500" y="414.300" width="18.700" height="36.200" fill="#bccdb8" fill-opacity=".42" stroke="#ccd2c0" stroke-width=".5"/>
<path d="M773 433H762" stroke="#b9ad98" stroke-width=".8" fill="none"/><path d="M758 433L764 429.300L762.500 433L764 436.700Z" fill="#b9ad98"/>
<path d="M639.500 403.500L643 398.500" stroke="#333" stroke-width=".7"/>
<rect x="829.500" y="448" width="27" height="45.500" fill="#e6dabd" opacity=".8"/>
<rect x="845.500" y="445" width="11.500" height="48.500" fill="#d9cbae"/>
<rect x="845.500" y="445" width="11.500" height="2.300" fill="#b9a08a"/>
<rect x="817.500" y="427" width="12" height="66.500" fill="none" stroke="#d0c6aa" stroke-width=".5"/>
<rect x="856.700" y="427" width="12" height="66.500" fill="#eadfc2" stroke="#d6ccb0" stroke-width=".5"/>
<rect x="856.700" y="445" width="4.300" height="48.500" fill="#dccfb0"/>
<path d="M817.500 493.500V427H823.800" stroke="#55524c" stroke-width=".7" fill="none"/>
<rect x="349.800" y="259" width="143.500" height="60.300" rx="1" fill="none" stroke="#7dfcfc" stroke-width="1.400"/>
<path d="M419.800 288.200L423.400 291.200M420 291.300L420.300 290.300M423 288L423.300 289" stroke="#4af0f0" stroke-width=".9" fill="none"/>
<text x="370" y="697.400" font-family="'Liberation Sans','DejaVu Sans',sans-serif" font-size="22.500" fill="#111" textLength="57" lengthAdjust="spacingAndGlyphs">1 3/4&#8221;</text>
<text x="548.500" y="689.200" font-family="'Liberation Sans','DejaVu Sans',sans-serif" font-size="22.500" fill="#111" textLength="61" lengthAdjust="spacingAndGlyphs">1 3/16</text>
</svg>
</div>
<div id="vscroll" class="abs">
<div class="tri" style="left:3px;top:6px;border-left-width:5px;border-right-width:5px;border-top:0;border-bottom:6px solid #000"></div>
<div class="abs" style="left:0;top:472px;width:15px;height:17px;background:#e4e4e4;border-top:1px solid #666;border-bottom:1px solid #666"></div>
<div class="tri" style="left:3px;top:1080px;border-left-width:5px;border-right-width:5px;border-top:6px solid #000"></div>
</div>
<div id="status" class="abs">
<div class="abs" style="left:4px;top:1px;width:57px;height:14px;background:#fff;border:1px solid #555"><span class="abs" style="left:3px;top:1px;font-size:10.500px;line-height:12px">200%</span><div class="abs" style="left:40px;top:0;width:15px;height:12px;background:#e6e6e6;border-left:1px solid #555"></div><div class="tri" style="left:44px;top:5px"></div></div>
<svg class="abs" style="left:68px;top:2px" width="36" height="12" viewBox="0 0 36 12"><rect x="2" y="2" width="1.500" height="8" fill="#111"/><path d="M10 2v8L4 6z" fill="#111"/><path d="M27 2v8L21.500 6z" fill="#111"/></svg>
<div class="abs" style="left:104px;top:1px;width:57px;height:14px;background:#fff;border:1px solid #555"><span class="abs" style="left:3px;top:1px;font-size:10.500px;line-height:12px">2</span><div class="abs" style="left:40px;top:0;width:15px;height:12px;background:#e6e6e6;border-left:1px solid #555"></div><div class="tri" style="left:44px;top:5px"></div></div>
<svg class="abs" style="left:168px;top:2px" width="36" height="12" viewBox="0 0 36 12"><path d="M5 2v8l5.500-4z" fill="#9a9a9a"/><path d="M20 2v8l5.500-4z" fill="#9a9a9a"/><rect x="26.500" y="2" width="1.500" height="8" fill="#9a9a9a"/></svg>
<div class="abs" style="left:203px;top:0;width:1px;height:15px;background:#888"></div>
<span class="abs" style="left:204px;top:2px;width:200px;text-align:center;font-size:11px;line-height:13px;color:#111">Group Selection</span>
<div class="abs" style="left:404px;top:0;width:1px;height:15px;background:#888"></div>
<div class="tri" style="left:409px;top:3px;border:0;border-top:5px solid transparent;border-bottom:5px solid transparent;border-left:6px solid #000"></div>
<div class="abs" style="left:422px;top:0;width:584px;height:15px;background:#999;border-left:1px solid #555"></div>
<div class="tri" style="left:427px;top:3px;border:0;border-top:5px solid transparent;border-bottom:5px solid transparent;border-right:6px solid #000"></div>
<div class="abs" style="left:758px;top:0;width:16px;height:15px;background:#e2e2e2;border-left:1px solid #777;border-right:1px solid #777"></div>
<div class="tri" style="left:994px;top:3px;border:0;border-top:5px solid transparent;border-bottom:5px solid transparent;border-left:6px solid #000"></div>
<div class="abs" style="left:1006px;top:0;width:16px;height:15px;background:#dcdcdc;border-left:1px solid #666;border-radius:0 0 4px 0"></div>
<svg class="abs" style="left:1008px;top:2px" width="12" height="12" viewBox="0 0 12 12"><path d="M10 3v1M7 6h3M5 8h5M3 10h7" stroke="#888" stroke-width="1"/></svg>
</div>
<svg id="panels" class="abs" style="left:0;top:0" width="90" height="930" viewBox="0 0 90 930">
<defs><linearGradient id="pg1" x1="0" y1="0" x2="1" y2="0"><stop offset="0" stop-color="#2a2a2a"/><stop offset="1" stop-color="#f4f4f4"/></linearGradient><linearGradient id="pg2" x1="0" y1="0" x2="0" y2="1"><stop offset="0" stop-color="#c4c4c4"/><stop offset="1" stop-color="#8a8a8a"/></linearGradient><linearGradient id="pgH" x1="0" y1="0" x2="0" y2="1"><stop offset="0" stop-color="#8c8c8c"/><stop offset="1" stop-color="#727272"/></linearGradient></defs>
<path d="M0 97V86.500Q0 83.500 3 83.500H75Q78 83.500 78 86.500V97Z" fill="url(#pgH)"/>
<path d="M5.500 87.500L10 92.500M10 87.500L5.500 92.500" stroke="#2a2a2a" stroke-width="1.200"/>
<path d="M28 87.500L31 90.200L28 93ZM32 87.500L35 90.200L32 93Z" fill="#2e2e2e"/>
<path d="M66 87.500L69 90.200L66 93ZM70 87.500L73 90.200L70 93Z" fill="#2e2e2e"/>
<rect x="0" y="97" width="38.300" height="821" fill="#d7d7d7"/>
<rect x="38.300" y="97" width="2.700" height="478.500" fill="#7a7a7a"/>
<rect x="37.500" y="97" width="1" height="821" fill="#a8a8a8"/>
<rect x="0" y="918" width="38.500" height="1" fill="#6a6a6a"/>
<rect x="9" y="101.5" width="1" height="3" fill="#8c8c8c"/><rect x="11" y="101.5" width="1" height="3" fill="#8c8c8c"/><rect x="13" y="101.5" width="1" height="3" fill="#8c8c8c"/><rect x="15" y="101.5" width="1" height="3" fill="#8c8c8c"/><rect x="17" y="101.5" width="1" height="3" fill="#8c8c8c"/><rect x="19" y="101.5" width="1" height="3" fill="#8c8c8c"/><rect x="21" y="101.5" width="1" height="3" fill="#8c8c8c"/><rect x="23" y="101.5" width="1" height="3" fill="#8c8c8c"/><rect x="25" y="101.5" width="1" height="3" fill="#8c8c8c"/><rect x="27" y="101.5" width="1" height="3" fill="#8c8c8c"/>
<rect x="4" y="209.0" width="30" height="1" fill="#a2a2a2"/>
<rect x="4" y="403.0" width="30" height="1" fill="#a2a2a2"/>
<rect x="4" y="549.0" width="30" height="1" fill="#a2a2a2"/>
<rect x="4" y="647.0" width="30" height="1" fill="#a2a2a2"/>
<rect x="4" y="697.5" width="30" height="1" fill="#a2a2a2"/>
<rect x="4" y="795.0" width="30" height="1" fill="#a2a2a2"/>
<path d="M15 116V131.500L18.600 128L21 133L23 132L20.700 127.300L25 126.500Z" fill="#2e2e2e"/>
<rect x="5.500" y="138.500" width="27" height="21" fill="#8e8e8e" stroke="#6a6a6a" stroke-width="1"/>
<path d="M12.500 141V155L15.600 152L18 156.800L20 155.800L17.700 151.200L21.500 150.500Z" fill="#fafafa" stroke="#111" stroke-width="1.300" stroke-linejoin="miter"/>
<path d="M21.500 145.500H29M25.200 141.800V149.200" stroke="#111" stroke-width="1.700"/>
<path d="M32 155.500V159H28.500Z" fill="#111"/>
<path d="M19.500 174L26.500 180" stroke="#1a1a1a" stroke-width="1.600" stroke-linecap="round"/>
<path d="M16 164.500V168M16 172V176M10 170H13.500M18.500 170H22M11.800 166L14.300 168.300M20.500 166L18 168.300M11.800 174.300L14.300 172M19.500 173L18 171.800" stroke="#2a2a2a" stroke-width=".9"/>
<ellipse cx="18.500" cy="194.500" rx="7.500" ry="4.500" fill="none" stroke="#222" stroke-width="1.300"/>
<path d="M12.500 197.500C10.500 199 12 200.500 14 199.500C16 198.500 15.500 202 13.500 203" fill="none" stroke="#222" stroke-width="1"/>
<path d="M19.500 192.500V204L22 201.500L27 200.500Z" fill="#eee" stroke="#222" stroke-width="1"/>
<path d="M11.500 230.500L14.500 220.500L20.500 216.500L25.500 221L21.500 226.500Z" fill="#f0f0f0" stroke="#222" stroke-width="1.100" stroke-linejoin="round"/>
<path d="M11.500 230.500L18.500 223.500" stroke="#222" stroke-width=".9"/><circle cx="19" cy="223" r="1" fill="#222"/>
<path d="M20.300 216L23 213.500L28.500 218.500L26 221.300Z" fill="#2e2e2e"/>
<path d="M32 229.5V233H28.5Z" fill="#111"/>
<text x="19" y="253" text-anchor="middle" font-family="'Liberation Serif','DejaVu Serif',serif" font-size="19" fill="#2a2a2a">T</text>
<path d="M32 253.5V257H28.5Z" fill="#111"/>
<path d="M12 276.500L25 264.500" stroke="#2a2a2a" stroke-width="1.200"/>
<path d="M32 278.0V281.5H28.5Z" fill="#111"/>
<rect x="12.500" y="289.500" width="13" height="11" fill="url(#pg2)" stroke="#3a3a3a" stroke-width="1"/>
<path d="M32 302.0V305.5H28.5Z" fill="#111"/>
<path d="M27.500 311.500L19 320" stroke="#2e2e2e" stroke-width="1.500" stroke-linecap="round"/>
<path d="M10.500 324C13 324 14 321 16.500 320.500C18.500 320.500 19.500 323 18 325C16 327.500 12 326.500 10.500 324Z" fill="#2a2a2a"/>
<path d="M11.500 349L13 344.500L22.500 335.500L25.500 338.500L16 347.500Z" fill="#b8b8b8" stroke="#333" stroke-width=".9" stroke-linejoin="round"/>
<path d="M20.500 337.500L23.500 340.500L25.500 338.500L22.500 335.500Z" fill="#3a3a3a"/><path d="M11.500 349L13 344.500L16 347.500Z" fill="#f4f4f4" stroke="#333" stroke-width=".6"/>
<path d="M32 350.0V353.5H28.5Z" fill="#111"/>
<path d="M11.500 363.500H19C20 361 25 360 26.500 364C27.500 368 25 370 23 370.500V373.500H11.500Z" fill="#f2f2f2" stroke="#2a2a2a" stroke-width="1.200" stroke-linejoin="round"/>
<path d="M15 368C17 368.500 18.500 365.500 21 365C23 365 24 367 22.500 368.500C20.500 370.500 16.500 370 15 368Z" fill="#2a2a2a"/><path d="M23 364.500L28 360" stroke="#2a2a2a" stroke-width="1.200"/>
<path d="M12 394L17 385.500L27.500 384.500L23 393Z" fill="#8a8a8a" stroke="#2e2e2e" stroke-width=".8" stroke-linejoin="round"/>
<path d="M12 394L23 393L22.500 396.500L12.500 397.500Z" fill="#3a3a3a"/><path d="M23 393L27.500 384.500L27 388L22.500 396.500Z" fill="#555"/><path d="M14.500 389.700L25.300 388.700" stroke="#3a3a3a" stroke-width="1.600"/>
<path d="M32 398.5V402H28.5Z" fill="#111"/>
<circle cx="19" cy="416.500" r="6.500" fill="none" stroke="#2e2e2e" stroke-width="1.100" stroke-dasharray="1.600 1.800"/>
<path d="M16 410.500A6.500 6.500 0 0 1 25.500 416.500" fill="none" stroke="#2e2e2e" stroke-width="1.200"/><path d="M13 412.500L17.500 408.500L17.500 412.800Z" fill="#2e2e2e"/>
<path d="M32 423.5V427H28.5Z" fill="#111"/>
<rect x="15" y="434.500" width="11.500" height="9.500" fill="#ececec" stroke="#2e2e2e" stroke-width="1"/><rect x="10.500" y="440.500" width="8" height="6.500" fill="none" stroke="#2e2e2e" stroke-width="1"/>
<path d="M19.500 442L24.500 437M21.500 436.800H24.700V440" stroke="#222" stroke-width="1" fill="none"/>
<path d="M32 448.0V451.5H28.5Z" fill="#111"/>
<path d="M12.300 461.500C12 458.500 16.500 458 16.800 461.500C17 464.500 14 466.500 15.500 468.300C17.500 470 20.500 467.500 22 465C23.500 462.500 28 462.500 28 466.800C26.800 465.300 25 465.500 23.800 467.500C21.500 471.500 15.500 473.500 12.500 470.500C9.500 467 14.500 464.500 12.300 461.500Z" fill="#2a2a2a"/>
<path d="M11.500 470.800L21.500 460.300" stroke="#111" stroke-width="1"/><circle cx="11.300" cy="471" r="1.400" fill="#f0f0f0" stroke="#111" stroke-width=".8"/><circle cx="21.700" cy="460.200" r="1.400" fill="#f0f0f0" stroke="#111" stroke-width=".8"/>
<path d="M32 472.5V476H28.5Z" fill="#111"/>
<path d="M11 482.500V493L18 488Z" fill="#2e2e2e"/><rect x="16" y="483.500" width="10" height="10" fill="none" stroke="#2a2a2a" stroke-width="1.100" stroke-dasharray="2 1.500"/>
<rect x="15" y="492.5" width="2" height="2" fill="#1a1a1a"/>
<rect x="20.5" y="492.5" width="2" height="2" fill="#1a1a1a"/>
<rect x="25" y="492.5" width="2" height="2" fill="#1a1a1a"/>
<rect x="25" y="488" width="2" height="2" fill="#1a1a1a"/>
<rect x="25" y="482.5" width="2" height="2" fill="#1a1a1a"/>
<rect x="20.5" y="482.5" width="2" height="2" fill="#1a1a1a"/>
<circle cx="15" cy="511" r="4.800" fill="#f2f2f2" stroke="#2e2e2e" stroke-width="1"/><circle cx="20.500" cy="511" r="4.800" fill="#c8c8c8" fill-opacity=".7" stroke="#2e2e2e" stroke-width="1"/>
<path d="M11.500 511H19" stroke="#333" stroke-width="1" stroke-dasharray="1 1"/><path d="M22 511.500V521L24.500 519L28.500 518.500Z" fill="#2a2a2a"/>
<path d="M32 520.0V523.5H28.5Z" fill="#111"/>
<path d="M11.500 529.500V544L21.500 541V532ZM15 530.300V543M18.300 531.200V542M11.500 536.500L21.500 536.500M11.500 544H27M14 542H26M17 540.500H25" fill="none" stroke="#2a2a2a" stroke-width="1"/>
<path d="M32 545.0V548.5H28.5Z" fill="#111"/>
<rect x="11.500" y="557.500" width="15" height="11" fill="#f0f0f0" stroke="#2a2a2a" stroke-width="1.100"/>
<path d="M11.500 562C15 560 18 566 26.500 562M16 557.500C18 561 14 565 17 568.500M21.500 557.500C24 561 19 565 22 568.500M11.500 566C16 563 20 568 26.500 565.500" fill="none" stroke="#2a2a2a" stroke-width=".8"/>
<rect x="11.500" y="581.500" width="15" height="11" fill="url(#pg1)" stroke="#2a2a2a" stroke-width="1.100"/>
<path d="M12.500 616.500L13.500 613L20 606.500L22.500 609L16 615.500Z" fill="#f0f0f0" stroke="#222" stroke-width="1" stroke-linejoin="round"/>
<path d="M19 605.500L23.500 610" stroke="#222" stroke-width="2.200"/><path d="M21.500 607L25 603.500" stroke="#222" stroke-width="3" stroke-linecap="round"/>
<path d="M32 618.5V622H28.5Z" fill="#111"/>
<rect x="10.500" y="627.500" width="8" height="8" fill="#f4f4f4" stroke="#2a2a2a" stroke-width="1"/><rect x="15" y="631" width="8" height="8" rx="2.500" fill="#9a9a9a" stroke="#666" stroke-width=".6"/><circle cx="23.500" cy="637.500" r="4.200" fill="#2e2e2e"/>
<rect x="17.500" y="656.500" width="9" height="12" rx="1" fill="#8a8a8a" stroke="#3a3a3a" stroke-width="1"/><path d="M18.500 656.500L20 654.500H24L25.500 656.500Z" fill="#555"/><rect x="20.500" y="652.500" width="3" height="2.200" fill="#2a2a2a"/><circle cx="22" cy="663" r="2.300" fill="#f4f4f4" stroke="#222" stroke-width=".8"/><circle cx="22" cy="663" r=".8" fill="#222"/>
<circle cx="10.5" cy="654" r=".6" fill="#2a2a2a"/>
<circle cx="13" cy="653.3" r=".6" fill="#2a2a2a"/>
<circle cx="15.5" cy="654" r=".6" fill="#2a2a2a"/>
<circle cx="11.5" cy="656" r=".6" fill="#2a2a2a"/>
<circle cx="14" cy="655.6" r=".6" fill="#2a2a2a"/>
<circle cx="17" cy="654.8" r=".6" fill="#2a2a2a"/>
<circle cx="12.5" cy="657.5" r=".6" fill="#2a2a2a"/>
<circle cx="16" cy="656.8" r=".6" fill="#2a2a2a"/>
<path d="M32 668.0V671.5H28.5Z" fill="#111"/>
<path d="M11.500 678V691.500H27" fill="none" stroke="#2a2a2a" stroke-width="1.200"/><rect x="14" y="685" width="3" height="6" fill="#3a3a3a"/><rect x="19" y="680" width="3" height="11" fill="#6a6a6a"/><rect x="24" y="682.500" width="3" height="8.500" fill="#3a3a3a"/>
<path d="M32 692.0V695.5H28.5Z" fill="#111"/>
<rect x="13.500" y="706.500" width="11" height="9" fill="#eee" stroke="#2a2a2a" stroke-width="1.200"/><path d="M13.500 702V705M24.500 702V705M13.500 717V720M24.500 717V720M9 706.500H12M26 706.500H29M9 715.500H12M26 715.500H29" stroke="#3a3a3a" stroke-width="1"/>
<path d="M10.500 741.500L21 732.500L24 735.500Z" fill="#f4f4f4" stroke="#2a2a2a" stroke-width=".9" stroke-linejoin="round"/><path d="M20.500 733L24 729.500H29.500L24 735.800Z" fill="#3a3a3a"/>
<path d="M32 743.0V746.5H28.5Z" fill="#111"/>
<path d="M14.500 764.500V752.500H21L24.500 756V764.500H17.500" fill="#e8e8e8" stroke="#2a2a2a" stroke-width="1"/><path d="M21 752.500V756H24.500" fill="none" stroke="#2a2a2a" stroke-width=".8"/><path d="M11.500 764.500H16.500M14 762V767" stroke="#111" stroke-width="1.100"/>
<path d="M32 767.0V770.5H28.5Z" fill="#111"/>
<circle cx="17.500" cy="780.500" r="4.800" fill="#f2f2f2" stroke="#2a2a2a" stroke-width="1.300"/><path d="M21 784L27 790" stroke="#2a2a2a" stroke-width="2.200" stroke-linecap="round"/>
<rect x="8.500" y="803.500" width="6" height="6" fill="#d7d7d7" stroke="#111" stroke-width="1.600"/><rect x="5.500" y="800.500" width="6" height="6" fill="#f4f4f4" stroke="#111" stroke-width="1"/>
<path d="M26.500 802.500H29.500Q31.500 802.500 31.500 804.500V807.500" fill="none" stroke="#111" stroke-width="1.200"/><path d="M24 802.500L27.300 800V805ZM31.500 810L29 806.800H34Z" fill="#111"/>
<rect x="4.500" y="817.500" width="19" height="19" fill="#fff" stroke="#8a8a8a" stroke-width="1"/>
<rect x="14.500" y="827.500" width="19" height="19" fill="#fff" stroke="#555" stroke-width="1"/><rect x="17" y="830" width="14" height="14" fill="#e8e8e8" stroke="#000" stroke-width="3"/><rect x="20" y="833" width="8" height="8" fill="#cfcfcf" stroke="#fff" stroke-width="1"/>
<rect x="5.500" y="853.500" width="9" height="9" fill="#000"/><rect x="8" y="856" width="4" height="4" fill="#e8e8e8"/><rect x="14.500" y="853.500" width="9" height="9" fill="url(#pg1)"/><rect x="23.500" y="853.500" width="9.500" height="9" fill="#fff"/><path d="M24 862L32.500 854" stroke="#e8121a" stroke-width="1.600"/><rect x="5.500" y="853.500" width="27.500" height="9" fill="none" stroke="#3a3a3a" stroke-width=".8"/>
<circle cx="18" cy="876" r="3.800" fill="#f0f0f0" stroke="#2a2a2a" stroke-width="1"/><rect x="18.500" y="876.500" width="5.500" height="5.500" fill="#2e2e2e"/>
<rect x="15.500" y="895.500" width="11" height="8" fill="#ececec" stroke="#2a2a2a" stroke-width="1"/><rect x="15.500" y="895.500" width="11" height="2" fill="#3a3a3a"/><rect x="10.500" y="899.500" width="11" height="8" fill="#ececec" stroke="#2a2a2a" stroke-width="1"/>
<rect x="41" y="97" width="37" height="478.500" fill="#dadada"/>
<rect x="78" y="84" width="4" height="495" fill="#4a5462" opacity=".12"/>
<rect x="41" y="575.500" width="37" height="1" fill="#6a6a6a"/>
<rect x="41" y="136.8" width="37" height="1.200" fill="#5e5e5e"/>
<rect x="41" y="177.8" width="37" height="1.200" fill="#5e5e5e"/>
<rect x="41" y="218.8" width="37" height="1.200" fill="#5e5e5e"/>
<rect x="41" y="259.8" width="37" height="1.200" fill="#5e5e5e"/>
<rect x="41" y="300.8" width="37" height="1.200" fill="#5e5e5e"/>
<rect x="41" y="369.8" width="37" height="1.200" fill="#5e5e5e"/>
<rect x="41" y="410.8" width="37" height="1.200" fill="#5e5e5e"/>
<rect x="41" y="451.8" width="37" height="1.200" fill="#5e5e5e"/>
<rect x="41" y="492.8" width="37" height="1.200" fill="#5e5e5e"/>
<rect x="41" y="533.8" width="37" height="1.200" fill="#5e5e5e"/>
<rect x="50" y="101.5" width="1" height="3" fill="#8c8c8c"/><rect x="52" y="101.5" width="1" height="3" fill="#8c8c8c"/><rect x="54" y="101.5" width="1" height="3" fill="#8c8c8c"/><rect x="56" y="101.5" width="1" height="3" fill="#8c8c8c"/><rect x="58" y="101.5" width="1" height="3" fill="#8c8c8c"/><rect x="60" y="101.5" width="1" height="3" fill="#8c8c8c"/><rect x="62" y="101.5" width="1" height="3" fill="#8c8c8c"/><rect x="64" y="101.5" width="1" height="3" fill="#8c8c8c"/><rect x="66" y="101.5" width="1" height="3" fill="#8c8c8c"/><rect x="68" y="101.5" width="1" height="3" fill="#8c8c8c"/>
<rect x="50" y="142.5" width="1" height="3" fill="#8c8c8c"/><rect x="52" y="142.5" width="1" height="3" fill="#8c8c8c"/><rect x="54" y="142.5" width="1" height="3" fill="#8c8c8c"/><rect x="56" y="142.5" width="1" height="3" fill="#8c8c8c"/><rect x="58" y="142.5" width="1" height="3" fill="#8c8c8c"/><rect x="60" y="142.5" width="1" height="3" fill="#8c8c8c"/><rect x="62" y="142.5" width="1" height="3" fill="#8c8c8c"/><rect x="64" y="142.5" width="1" height="3" fill="#8c8c8c"/><rect x="66" y="142.5" width="1" height="3" fill="#8c8c8c"/><rect x="68" y="142.5" width="1" height="3" fill="#8c8c8c"/>
<rect x="50" y="183.5" width="1" height="3" fill="#8c8c8c"/><rect x="52" y="183.5" width="1" height="3" fill="#8c8c8c"/><rect x="54" y="183.5" width="1" height="3" fill="#8c8c8c"/><rect x="56" y="183.5" width="1" height="3" fill="#8c8c8c"/><rect x="58" y="183.5" width="1" height="3" fill="#8c8c8c"/><rect x="60" y="183.5" width="1" height="3" fill="#8c8c8c"/><rect x="62" y="183.5" width="1" height="3" fill="#8c8c8c"/><rect x="64" y="183.5" width="1" height="3" fill="#8c8c8c"/><rect x="66" y="183.5" width="1" height="3" fill="#8c8c8c"/><rect x="68" y="183.5" width="1" height="3" fill="#8c8c8c"/>
<rect x="50" y="224.5" width="1" height="3" fill="#8c8c8c"/><rect x="52" y="224.5" width="1" height="3" fill="#8c8c8c"/><rect x="54" y="224.5" width="1" height="3" fill="#8c8c8c"/><rect x="56" y="224.5" width="1" height="3" fill="#8c8c8c"/><rect x="58" y="224.5" width="1" height="3" fill="#8c8c8c"/><rect x="60" y="224.5" width="1" height="3" fill="#8c8c8c"/><rect x="62" y="224.5" width="1" height="3" fill="#8c8c8c"/><rect x="64" y="224.5" width="1" height="3" fill="#8c8c8c"/><rect x="66" y="224.5" width="1" height="3" fill="#8c8c8c"/><rect x="68" y="224.5" width="1" height="3" fill="#8c8c8c"/>
<rect x="50" y="265.4" width="1" height="3" fill="#8c8c8c"/><rect x="52" y="265.4" width="1" height="3" fill="#8c8c8c"/><rect x="54" y="265.4" width="1" height="3" fill="#8c8c8c"/><rect x="56" y="265.4" width="1" height="3" fill="#8c8c8c"/><rect x="58" y="265.4" width="1" height="3" fill="#8c8c8c"/><rect x="60" y="265.4" width="1" height="3" fill="#8c8c8c"/><rect x="62" y="265.4" width="1" height="3" fill="#8c8c8c"/><rect x="64" y="265.4" width="1" height="3" fill="#8c8c8c"/><rect x="66" y="265.4" width="1" height="3" fill="#8c8c8c"/><rect x="68" y="265.4" width="1" height="3" fill="#8c8c8c"/>
<rect x="50" y="306.4" width="1" height="3" fill="#8c8c8c"/><rect x="52" y="306.4" width="1" height="3" fill="#8c8c8c"/><rect x="54" y="306.4" width="1" height="3" fill="#8c8c8c"/><rect x="56" y="306.4" width="1" height="3" fill="#8c8c8c"/><rect x="58" y="306.4" width="1" height="3" fill="#8c8c8c"/><rect x="60" y="306.4" width="1" height="3" fill="#8c8c8c"/><rect x="62" y="306.4" width="1" height="3" fill="#8c8c8c"/><rect x="64" y="306.4" width="1" height="3" fill="#8c8c8c"/><rect x="66" y="306.4" width="1" height="3" fill="#8c8c8c"/><rect x="68" y="306.4" width="1" height="3" fill="#8c8c8c"/>
<rect x="50" y="375.0" width="1" height="3" fill="#8c8c8c"/><rect x="52" y="375.0" width="1" height="3" fill="#8c8c8c"/><rect x="54" y="375.0" width="1" height="3" fill="#8c8c8c"/><rect x="56" y="375.0" width="1" height="3" fill="#8c8c8c"/><rect x="58" y="375.0" width="1" height="3" fill="#8c8c8c"/><rect x="60" y="375.0" width="1" height="3" fill="#8c8c8c"/><rect x="62" y="375.0" width="1" height="3" fill="#8c8c8c"/><rect x="64" y="375.0" width="1" height="3" fill="#8c8c8c"/><rect x="66" y="375.0" width="1" height="3" fill="#8c8c8c"/><rect x="68" y="375.0" width="1" height="3" fill="#8c8c8c"/>
<rect x="50" y="416.2" width="1" height="3" fill="#8c8c8c"/><rect x="52" y="416.2" width="1" height="3" fill="#8c8c8c"/><rect x="54" y="416.2" width="1" height="3" fill="#8c8c8c"/><rect x="56" y="416.2" width="1" height="3" fill="#8c8c8c"/><rect x="58" y="416.2" width="1" height="3" fill="#8c8c8c"/><rect x="60" y="416.2" width="1" height="3" fill="#8c8c8c"/><rect x="62" y="416.2" width="1" height="3" fill="#8c8c8c"/><rect x="64" y="416.2" width="1" height="3" fill="#8c8c8c"/><rect x="66" y="416.2" width="1" height="3" fill="#8c8c8c"/><rect x="68" y="416.2" width="1" height="3" fill="#8c8c8c"/>
<rect x="50" y="457.2" width="1" height="3" fill="#8c8c8c"/><rect x="52" y="457.2" width="1" height="3" fill="#8c8c8c"/><rect x="54" y="457.2" width="1" height="3" fill="#8c8c8c"/><rect x="56" y="457.2" width="1" height="3" fill="#8c8c8c"/><rect x="58" y="457.2" width="1" height="3" fill="#8c8c8c"/><rect x="60" y="457.2" width="1" height="3" fill="#8c8c8c"/><rect x="62" y="457.2" width="1" height="3" fill="#8c8c8c"/><rect x="64" y="457.2" width="1" height="3" fill="#8c8c8c"/><rect x="66" y="457.2" width="1" height="3" fill="#8c8c8c"/><rect x="68" y="457.2" width="1" height="3" fill="#8c8c8c"/>
<rect x="50" y="498.2" width="1" height="3" fill="#8c8c8c"/><rect x="52" y="498.2" width="1" height="3" fill="#8c8c8c"/><rect x="54" y="498.2" width="1" height="3" fill="#8c8c8c"/><rect x="56" y="498.2" width="1" height="3" fill="#8c8c8c"/><rect x="58" y="498.2" width="1" height="3" fill="#8c8c8c"/><rect x="60" y="498.2" width="1" height="3" fill="#8c8c8c"/><rect x="62" y="498.2" width="1" height="3" fill="#8c8c8c"/><rect x="64" y="498.2" width="1" height="3" fill="#8c8c8c"/><rect x="66" y="498.2" width="1" height="3" fill="#8c8c8c"/><rect x="68" y="498.2" width="1" height="3" fill="#8c8c8c"/>
<rect x="50" y="539.2" width="1" height="3" fill="#8c8c8c"/><rect x="52" y="539.2" width="1" height="3" fill="#8c8c8c"/><rect x="54" y="539.2" width="1" height="3" fill="#8c8c8c"/><rect x="56" y="539.2" width="1" height="3" fill="#8c8c8c"/><rect x="58" y="539.2" width="1" height="3" fill="#8c8c8c"/><rect x="60" y="539.2" width="1" height="3" fill="#8c8c8c"/><rect x="62" y="539.2" width="1" height="3" fill="#8c8c8c"/><rect x="64" y="539.2" width="1" height="3" fill="#8c8c8c"/><rect x="66" y="539.2" width="1" height="3" fill="#8c8c8c"/><rect x="68" y="539.2" width="1" height="3" fill="#8c8c8c"/>
<rect x="52" y="114" width="17" height="1" fill="#3a3a3a"/><rect x="52" y="118" width="17" height="2" fill="#3a3a3a"/><rect x="52" y="123" width="17" height="3" fill="#3a3a3a"/>
<path d="M52.500 169.500V153.500H58.500L59.500 155.500H68.500V169.500Z" fill="none" stroke="#333" stroke-width="1.100"/><rect x="55.500" y="160.500" width="5" height="5" fill="#eee" stroke="#333" stroke-width="1"/><rect x="58.500" y="162.500" width="5" height="5" fill="#ccc" stroke="#333" stroke-width="1"/><rect x="57" y="157.500" width="9" height="8" fill="none" stroke="#333" stroke-width=".8"/>
<circle cx="58" cy="200.500" r="6" fill="#3a3a3a"/><circle cx="63" cy="205" r="6" fill="#dadada" fill-opacity=".55" stroke="#333" stroke-width="1.100"/>
<rect x="54.500" y="238.500" width="14" height="12" fill="#3a3a3a"/><circle cx="62" cy="243.500" r="4.800" fill="#dadada"/><circle cx="62.500" cy="243.500" r="3.200" fill="#dadada" stroke="#333" stroke-width="1"/><circle cx="56.500" cy="239.500" r="4" fill="#dadada" stroke="#333" stroke-width="1"/><circle cx="56.500" cy="239.500" r="2.100" fill="#333"/>
<path d="M56.500 283V274.500H68.500V290H63" fill="none" stroke="#333" stroke-width="1"/><rect x="54.500" y="287.500" width="6" height="6" fill="#3a3a3a" stroke="#333" stroke-width="1"/><rect x="52.500" y="284.500" width="5.500" height="5.500" fill="#eee" stroke="#333" stroke-width="1"/>
<circle cx="60.500" cy="325.500" r="8" fill="none" stroke="#333" stroke-width="1.100" stroke-dasharray="2.200 1.600"/><circle cx="60.500" cy="325.500" r="5.300" fill="#3a3a3a"/>
<rect x="52.5" y="348.5" width="5.300" height="5" fill="#3c3c3c"/>
<rect x="57.8" y="348.5" width="5.300" height="5" fill="#8a8a8a"/>
<rect x="63.1" y="348.5" width="5.300" height="5" fill="#b4b4b4"/>
<rect x="52.5" y="353.5" width="5.300" height="5" fill="#c0c0c0"/>
<rect x="57.8" y="353.5" width="5.300" height="5" fill="#b0b0b0"/>
<rect x="63.1" y="353.5" width="5.300" height="5" fill="#6a6a6a"/>
<rect x="52.500" y="348.500" width="16" height="10" fill="none" stroke="#555" stroke-width=".8"/>
<path d="M51.500 395C51.500 390 56 387.500 61 387.500C66 387.500 70 390 70 393.500C70 396 67.500 396 66 396.500C64.500 397.500 66.500 399 65 400C62 401.500 51.500 401 51.500 395Z" fill="#2e2e2e"/>
<circle cx="55" cy="393.5" r="1.300" fill="#e6e6e6"/>
<circle cx="58.5" cy="390.5" r="1.300" fill="#e6e6e6"/>
<circle cx="63" cy="390" r="1.300" fill="#e6e6e6"/>
<circle cx="66.5" cy="392.5" r="1.300" fill="#e6e6e6"/>
<circle cx="56.5" cy="397.5" r="1.300" fill="#e6e6e6"/>
<circle cx="60.5" cy="398.7" r="1.300" fill="#e6e6e6"/>
<path d="M52.500 443.500V427.500A16 16 0 0 1 68.500 443.500Z" fill="#8a8a8a" stroke="#333" stroke-width="1.100"/><path d="M52.500 443.500V427.500A16 16 0 0 1 58.600 428.700Z" fill="#eaeaea"/><path d="M52.500 443.500L58.600 428.700A16 16 0 0 1 63.800 432.200Z" fill="#bcbcbc"/><path d="M52.500 443.500L67.300 437.400A16 16 0 0 1 68.500 443.500Z" fill="#3c3c3c"/><path d="M52.500 443.500L63.800 432.200A16 16 0 0 1 67.300 437.400Z" fill="#6e6e6e"/>
<path d="M52.500 484.5V468.5H58.500L59.500 470.5H68.500V484.5Z" fill="none" stroke="#333" stroke-width="1.100"/><rect x="54" y="475" width="4" height="4" fill="#3a3a3a"/><rect x="58" y="475" width="4" height="4" fill="#9a9a9a"/><rect x="62" y="475" width="4" height="4" fill="#fafafa"/>
<path d="M52.500 525.5V509.5H58.500L59.500 511.5H68.500V525.5Z" fill="none" stroke="#333" stroke-width="1.100"/><rect x="54" y="516" width="4" height="4" fill="#3a3a3a"/><rect x="58" y="516" width="4" height="4" fill="#9a9a9a"/><rect x="62" y="516" width="4" height="4" fill="#fafafa"/>
<rect x="52.500" y="552.500" width="16" height="11" fill="url(#pg1)" stroke="#333" stroke-width="1.100"/>
</svg>
</body>
</html>
